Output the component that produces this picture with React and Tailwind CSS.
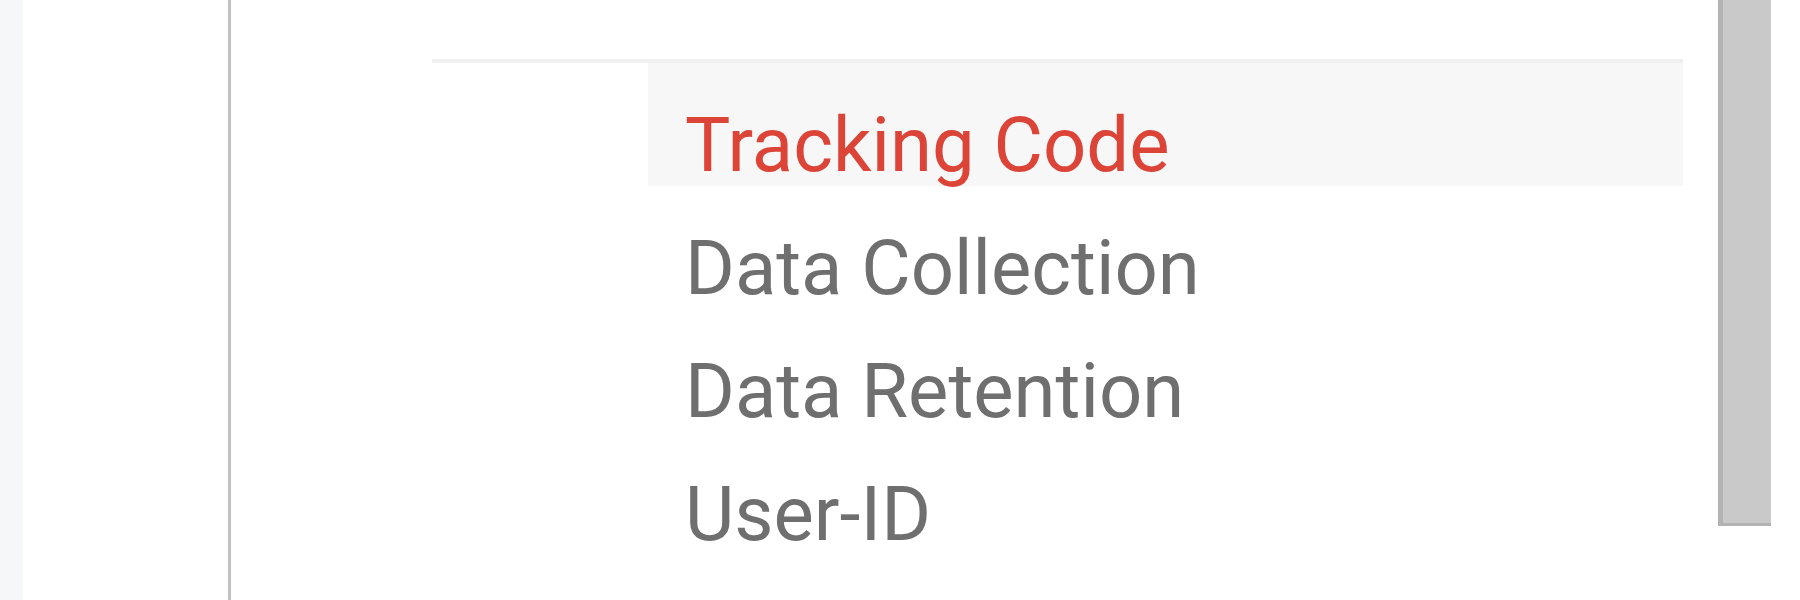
export default function App() {
  const items = [
    { label: "Tracking Code", active: true },
    { label: "Data Collection" },
    { label: "Data Retention" },
    { label: "User-ID" },
  ];
  return (
    <div
      className="flex h-[600px] w-[1800px] overflow-hidden bg-white"
      style={{ fontFamily: "Roboto, 'Liberation Sans', sans-serif" }}
    >
      <div className="w-[23px] shrink-0 bg-[#f5f7f9]" />
      <div className="w-[205px] shrink-0 bg-white" />
      <div className="w-[3px] shrink-0 bg-[#c2c2c2] shadow-[0_0_1px_#dcdcdc]" />
      <div className="flex-1 pl-[201px] pt-[59px]">
        <div className="w-[1251px] border-t-4 border-[#f0f0f0]">
          <div className="pl-[216px]">
            {items.map((it) => (
              <div
                key={it.label}
                className={
                  it.active
                    ? "h-[123px] bg-[#f7f7f7] pl-[37px] pt-[38px] text-[76px] leading-[89px] text-[#db4437]"
                    : "h-[123px] pl-[37px] pt-[38px] text-[76px] leading-[89px] text-[#6f6f6f]"
                }
              >
                {it.label}
              </div>
            ))}
          </div>
        </div>
      </div>
      <div className="w-[82px] shrink-0 flex">
        <div className="h-[526px] w-[53px] border-l-[5px] border-b-[3px] border-[#b3b3b3] bg-[#c9c9c9]" />
      </div>
    </div>
  );
}
